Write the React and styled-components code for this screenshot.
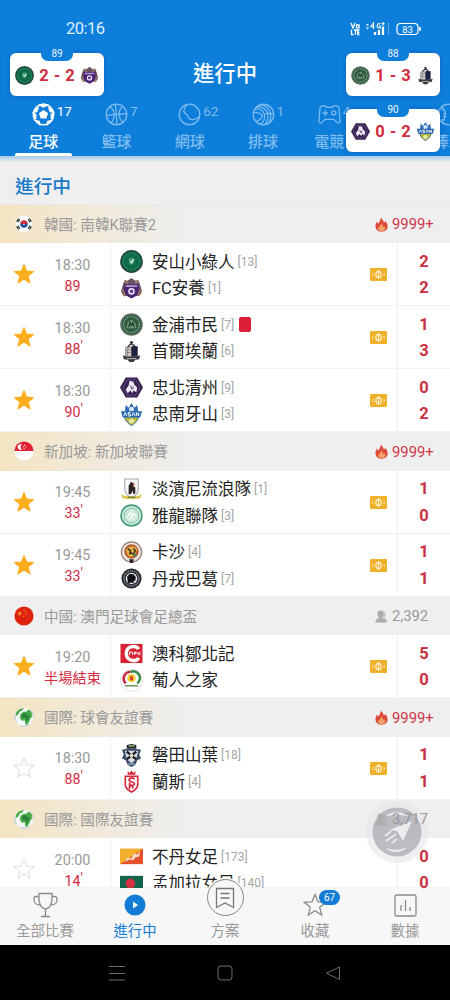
import React from "react"
import styled, { createGlobalStyle } from "styled-components"

const sports = [
    { name: "足球", count: "17", icon: "soccer", active: true },
    { name: "籃球", count: "7", icon: "basketball" },
    { name: "網球", count: "62", icon: "tennis" },
    { name: "排球", count: "1", icon: "volleyball" },
    { name: "電競", count: "4", icon: "esports", width: 59 },
    { name: "棒球", count: "", icon: "baseball", width: 180 }
]

const leagues = [
    {
        name: "韓國: 南韓K聯賽2", flag: "korea", hot: true, warm: true, viewers: "9999+",
        matches: [
            { starred: true, time: "18:30", minute: "89", tips: true, teams: [
                { crest: "ansan", name: "安山小綠人", rank: 13, score: 2 },
                { crest: "anyang", name: "FC安養", rank: 1, score: 2 }
            ] },
            { starred: true, time: "18:30", minute: "88", tick: true, tips: true, teams: [
                { crest: "gimpo", name: "金浦市民", rank: 7, score: 1, redCard: true },
                { crest: "seoul", name: "首爾埃蘭", rank: 6, score: 3 }
            ] },
            { starred: true, time: "18:30", minute: "90", tick: true, tips: true, teams: [
                { crest: "cheongju", name: "忠北清州", rank: 9, score: 0 },
                { crest: "asan", name: "忠南牙山", rank: 3, score: 2 }
            ] }
        ]
    },
    {
        name: "新加坡: 新加坡聯賽", flag: "singapore", hot: true, warm: true, viewers: "9999+",
        matches: [
            { starred: true, time: "19:45", minute: "33", tick: true, tips: true, teams: [
                { crest: "tampines", name: "淡濱尼流浪隊", rank: 1, score: 1 },
                { crest: "geylang", name: "雅龍聯隊", rank: 3, score: 0 }
            ] },
            { starred: true, time: "19:45", minute: "33", tick: true, tips: true, teams: [
                { crest: "khalsa", name: "卡沙", rank: 4, score: 1 },
                { crest: "tanjong", name: "丹戎巴葛", rank: 7, score: 1 }
            ] }
        ]
    },
    {
        name: "中國: 澳門足球會足總盃", flag: "china", viewers: "2,392",
        matches: [
            { starred: true, time: "19:20", minute: "半場結束", tips: true, teams: [
                { crest: "cpk", name: "澳科鄒北記", score: 5 },
                { crest: "portugal", name: "葡人之家", score: 0 }
            ] }
        ]
    },
    {
        name: "國際: 球會友誼賽", flag: "globe", hot: true, warm: true, viewers: "9999+",
        matches: [
            { time: "18:30", minute: "88", tick: true, tips: true, teams: [
                { crest: "jubilo", name: "磐田山葉", rank: 18, score: 1 },
                { crest: "reims", name: "蘭斯", rank: 4, score: 1 }
            ] }
        ]
    },
    {
        name: "國際: 國際友誼賽", flag: "globe", warm: true, viewers: "3,717",
        matches: [
            { time: "20:00", minute: "14", tick: true, teams: [
                { crest: "bhutan", name: "不丹女足", rank: 173, score: 0 },
                { crest: "bangladesh", name: "孟加拉女足", rank: 140, score: 0 }
            ] }
        ]
    }
]

const crests = {
    ansan: (
        <>
            <circle cx="12" cy="12" r="11" fill="#0d6b47" stroke="#26483d" strokeWidth="1.8" />
            <circle cx="12" cy="12" r="8.6" fill="none" stroke="#2f8a66" strokeWidth="1.4" strokeDasharray="1.2 .9" />
            <path d="M8.5 10c1-3 6-3.500 7 0l-1 4-3 2.500-2-2z" fill="#2f8a66" />
            <path d="M10 9l2 3 1-3 2 1-2 4h-2z" fill="#bfe3d0" />
        </>
    ),
    anyang: (
        <>
            <path d="M3 8l2-5 3 1 4-3 4 3 3-1 2 5 2 7-3 5-3-.5-5 3-5-3-3 .5-3-5z" fill="#6b5363" />
            <path d="M2 14l3 2-1 4M22 14l-3 2 1 4M6 4l2 3M18 4l-2 3" stroke="#b08b5a" strokeWidth="1.500" fill="none" />
            <path d="M4.500 7.500h15v7c0 4-4 6-7.500 7.500C8.500 20.500 4.500 18.500 4.500 14.500z" fill="#4a2374" />
            <path d="M6 9.500h12" stroke="#a995c9" strokeWidth="2" />
            <circle cx="12" cy="15" r="3.400" fill="#efe9f7" />
            <path d="M12 12.800l2 1.500-.8 2.300h-2.400L10 14.300z" fill="#5d3b91" />
        </>
    ),
    gimpo: (
        <>
            <circle cx="12" cy="12" r="11" fill="#2f5a3f" stroke="#5f7267" strokeWidth="1.600" />
            <circle cx="12" cy="12" r="8.300" fill="none" stroke="#8fae96" strokeWidth="1.300" strokeDasharray="1.400 1" />
            <path d="M7 16c0-5 2-8 5-9 3 1 5 4 5 9z" fill="#6f9678" />
            <path d="M9 15l1.500-5L12 13l1.500-3 1.500 5" stroke="#21452e" strokeWidth="1.400" fill="none" />
        </>
    ),
    seoul: (
        <>
            <path d="M12 1v4M10.300 2.500h3.400M8 7l4-3.500L16 7" stroke="#303038" strokeWidth="1.500" fill="none" />
            <path d="M6 7.500h6v10H6z" fill="#d9cfca" stroke="#55555c" strokeWidth=".8" />
            <path d="M12 6.500h6.500v11H12z" fill="#1c2340" />
            <path d="M7 10h4M7 13h4M8 9v8" stroke="#77706c" strokeWidth=".8" />
            <path d="M3 16l4 1.500h10l4-1.500-1 4-4 .5-2 2.500h-4l-2-2.500-4-.5z" fill="#34343c" />
            <path d="M7 19.500h10" stroke="#c9c9cf" strokeWidth="1" />
        </>
    ),
    cheongju: (
        <>
            <path d="M6 1.500h12L24 12l-6 10.500H6L0 12z" fill="#35204f" />
            <path d="M7.500 4h9l4.500 8-4.500 8h-9L3 12z" fill="none" stroke="#6d5a8c" strokeWidth=".8" />
            <path d="M10 5l4 1 1 3 3 3-1 5-3-2-1 3-2-3-3 3-2-4 3-4z" fill="#eeeaf5" />
            <path d="M11 10l1.500 4M14 11l-1 3" stroke="#4a3468" strokeWidth="1" />
        </>
    ),
    asan: (
        <>
            <path d="M6 2l3 3 3-5 3 5 3-3 1 7H5z" fill="#2f6cb5" />
            <circle cx="12" cy="6.500" r="2.600" fill="#d6e8f6" />
            <path d="M4.500 12h15c0 6-3.500 9-7.500 11.500C8 21 4.500 18 4.500 12z" fill="#b9b63c" stroke="#33659e" strokeWidth="1" />
            <path d="M1 8.500h22l-2 6.500H3z" fill="#2664ae" />
            <path d="M4 13.500l1.500-3.500L7 13.500M11 10H8.500v1.700H11v1.800H8.500M12.500 13.500L14 10l1.500 3.500M17 13.500V10l2.500 3.500V10" stroke="#fff" strokeWidth="1" fill="none" />
            <path d="M12 16l3 2-1 3h-4l-1-3z" fill="#e4e7a4" />
        </>
    ),
    tampines: (
        <>
            <path d="M5 1h14v10c0 5-3 8-7 10-4-2-7-5-7-10z" fill="#fbfbfb" stroke="#a8a8a8" strokeWidth="1.200" />
            <path d="M9 17V8l2.500-4L15 6l-1 2.500L16 10v6l-2 1-1-4-1.500 4z" fill="#2b2525" />
            <path d="M13 6l3 1-2 2z" fill="#df6541" />
            <path d="M1 17l5 2h12l5-2-2 4-5 1H8l-5-1z" fill="#d8c547" />
            <path d="M8 20h8" stroke="#517e38" strokeWidth="1.200" />
        </>
    ),
    geylang: (
        <>
            <circle cx="12" cy="12" r="10.900" fill="#d9efe4" stroke="#4b9d7c" strokeWidth="1.800" />
            <circle cx="12" cy="12" r="7.800" fill="#c6e6d7" stroke="#7bbfa0" strokeWidth="1" />
            <path d="M7 15l3-5 2-3v6l3-3 2 5M9 17l3-3 3 3" stroke="#f8fffb" strokeWidth="1.300" fill="none" />
        </>
    ),
    khalsa: (
        <>
            <circle cx="12" cy="11.500" r="10.600" fill="#e9e4dc" stroke="#9b7873" strokeWidth="1.200" />
            <circle cx="12" cy="11" r="7.500" fill="#b8572e" />
            <path d="M6 9c2-4 10-5 12 0l-2 5-4 3-4-2z" fill="#e2b441" />
            <path d="M8 8l3 2-1 4M14 8l2 2-2 4-3-2" stroke="#45301f" strokeWidth="1.600" fill="none" />
            <path d="M9.500 19h5l-1 4h-3z" fill="#26272d" />
            <path d="M14 13l3 3" stroke="#47845b" strokeWidth="2" />
        </>
    ),
    tanjong: (
        <>
            <circle cx="12" cy="12" r="10.500" fill="#24282c" />
            <circle cx="12" cy="12" r="7.900" fill="none" stroke="#7f868b" strokeWidth="1.600" strokeDasharray="1.400 .8" />
            <circle cx="12" cy="12" r="6" fill="#e7e9ea" />
            <path d="M8 16l-.5-6L10 7.200l4 .3 2.500 3L16 14l-2 1 .5 2.500-3-1.500-2 1.500z" fill="#101215" />
        </>
    ),
    cpk: (
        <>
            <path d="M.5 2h23v20H.5z" fill="#d72332" />
            <path d="M19.500 7.500C17 3 7 3.500 6.500 12c.5 8.500 10.500 9 13 4.500" fill="none" stroke="#fff" strokeWidth="3.600" />
            <path d="M10 10.500v3M10 10.500h3v3M15 13.500v-3h2v1.500h-2M19 10.500v3M21.500 10.500L19 12l2.500 1.500" stroke="#fff" strokeWidth="1" fill="none" />
        </>
    ),
    portugal: (
        <>
            <circle cx="12" cy="12" r="11.400" fill="#fff" stroke="#d8d8d8" strokeWidth=".8" />
            <path d="M6 15a7 7 0 0 1 5-12" fill="none" stroke="#c3283d" strokeWidth="2.600" />
            <path d="M11 3a7 7 0 0 1 7 12" fill="none" stroke="#338b47" strokeWidth="2.600" />
            <circle cx="12" cy="9.500" r="4.400" fill="#f0d335" />
            <path d="M10.500 7.500h3V11L12 12.500 10.500 11z" fill="#d93b33" />
            <path d="M5 17.500h14" stroke="#6b8d58" strokeWidth="1.500" />
        </>
    ),
    jubilo: (
        <>
            <path d="M7 1l5-1 5 1v4H7z" fill="#222c3b" />
            <path d="M9 2h6" stroke="#a3b94a" strokeWidth="1.500" />
            <path d="M2 6l6-1h8l6 1-2 5 2 4-4 2-2 5-4 2-4-2-2-5-4-2 2-4z" fill="#3b4b66" />
            <path d="M5 7h14l-2 9-5 4-5-4z" fill="#d5dce4" />
            <path d="M7 8l10 8M17 8L7 16" stroke="#16191f" strokeWidth="2.400" />
            <circle cx="12" cy="12" r="2" fill="#e6dcb8" />
            <path d="M8 21h8" stroke="#90a4bd" strokeWidth="1.500" />
        </>
    ),
    reims: (
        <>
            <path d="M8 1l2 2 2-2.500L14 3l2-2v4H8z" fill="#d5263a" />
            <path d="M5.500 6.500h13V15c0 4-3 6-6.500 8-3.500-2-6.500-4-6.500-8z" fill="#fff" stroke="#d5263a" strokeWidth="1.700" />
            <path d="M15 9.500c-1-1.500-5.500-1.300-5.500 1 0 2.500 5.500 1.500 5.500 4 0 1.500-4 2.500-5.500.5M10 20v-7M14 19l-2-3" fill="none" stroke="#d5263a" strokeWidth="1.800" />
        </>
    ),
    bhutan: (
        <>
            <path d="M0 4h24v16H0z" fill="#e5502a" />
            <path d="M0 4h24L0 20z" fill="#f3b02d" />
            <path d="M5 18l3-5 4 1 2-5 4 1 3-4-1 6-4 1-2 3-4-1z" fill="#f6dcc7" />
        </>
    ),
    bangladesh: (
        <>
            <path d="M0 4h24v16H0z" fill="#13664e" />
            <circle cx="10.800" cy="12" r="5" fill="#d63140" />
        </>
    )
}

const flags = {
    korea: (
        <>
            <circle cx="12" cy="12" r="10.500" fill="#fff" />
            <path d="M7.500 12a4.500 4.500 0 0 1 9 0z" fill="#cf3045" />
            <path d="M7.500 12a4.500 4.500 0 0 0 9 0c-2-2-3.500 1.500-5 .8C9.500 11.500 8.500 11 7.500 12z" fill="#1e4f9c" />
            <path d="M3 9l2.500-3.500M4.500 10L7 6.500M21 9l-2.500-3.500M19.500 10L17 6.500M3 15l2.500 3.500M4.500 14L7 17.500M21 15l-2.500 3.500M19.500 14L17 17.500" stroke="#292929" strokeWidth="1.300" />
        </>
    ),
    singapore: (
        <>
            <circle cx="12" cy="12" r="11.500" fill="#fff" />
            <path d="M.5 12a11.500 11.500 0 0 1 23 0z" fill="#e02033" />
            <path d="M9.500 4a3.600 3.600 0 1 0 0 6.500 4 4 0 0 1 0-6.500z" fill="#fff" />
            <path d="M12 5h1.300M10.500 7h1.300M13.500 7h1.300M11.500 9.200h1.300" stroke="#fff" strokeWidth="1.200" />
        </>
    ),
    china: (
        <>
            <circle cx="12" cy="12" r="11.500" fill="#de2410" />
            <path d="M7 6l.9 2h2.100l-1.700 1.400.6 2.200L7 10.300l-1.900 1.300.6-2.200L4 8h2.100z" fill="#f5a12b" />
            <path d="M11.500 4.500h1.200M13.500 7h1.200M13.300 10h1.200M11 12.500h1.200" stroke="#f5a12b" strokeWidth="1.200" />
        </>
    ),
    globe: (
        <>
            <circle cx="12" cy="12" r="11" fill="#f5f8f8" />
            <path d="M1.500 9A11 11 0 0 0 3 18M19 3.500A11 11 0 0 1 23 12M8 22.300A11 11 0 0 0 18 21" fill="none" stroke="#b9cdd8" strokeWidth="1.400" />
            <path d="M2.500 7C4.500 3.500 8 1.500 12 1.300L10 4 7 5.500 5 9l-3 2zM8 8l4-2.500 3 .5 1-2.500 3 .5 3 4-1 1.500 1 2.500-2 1-2 5-2.500 3.500-2-1-.5-4.500-3.500.5L7 13z" fill="#46a844" />
            <path d="M10 8.500l4-1 2 3 3-1-2 5-2 3-1-4.500-4-.5z" fill="#267d37" />
        </>
    )
}

const sportIcons = {
    soccer: (
        <>
            <circle cx="12" cy="12" r="10.700" />
            <path d="M12 8l4 3-1.500 4.500h-5L8 11zM8 2.200l4 2 4-2-4-1zM1.500 9.500L5 9l1.500-4-3 2zM22.500 9.500L19 9l-1.500-4 3 2zM4 18.500l3.500.5.500 3.500zM20 18.500l-3.500.5-.5 3.500zM1.500 10.500L4 12v4l-1.500.5zM22.500 10.500L20 12v4l1.500.5z" fill="currentColor" />
        </>
    ),
    basketball: (
        <>
            <circle cx="12" cy="12" r="10.700" />
            <path d="M11 1.500l1.500 21M1.500 13L22.500 11M5 4c6 4 6 12 1 17M18.500 3.500c-5 4-5 12 .5 17" />
        </>
    ),
    tennis: (
        <>
            <circle cx="12" cy="12" r="10.700" />
            <path d="M9.500 1.700C5.500 6 5 10.500 8.500 11.500c2 .5 1.500 2.500 2.500 4 2 3 7 2 11-1" />
        </>
    ),
    volleyball: (
        <>
            <circle cx="12" cy="12" r="10.700" />
            <path d="M3 6.500c4-1 8 1 10 5.500M4.500 4.500C9 3 14 5.500 16.500 11M8 2c6 0 10 4 11.500 9M1.500 10c4-.5 7 .5 9.500 3.500M13 12c3-1.500 6.500-1.500 9.700 0M13 12c.5 4-1 8-4 10.300M16.500 11.200c.8 4-.5 8-3 11.300M19.500 11c.5 3-.2 6-1.500 9M11 13.500c-1.500 3-4 5-6.500 6" />
        </>
    ),
    esports: (
        <>
            <path d="M5 3h3l1 1.500h6L16 3h3c2 0 3 1 3 3l1 13c0 2-2 2.500-3.500 1l-3-3h-9l-3 3C3 21.500 1 21 1 19L2 6c0-2 1-3 3-3z" />
            <path d="M7.500 7.500v6M4.500 10.500h6" />
            <circle cx="16.500" cy="10.500" r="2.200" />
        </>
    ),
    baseball: (
        <>
            <circle cx="12" cy="12" r="10.700" />
            <path d="M5 4c5 5 5 11 0 16M19 4c-5 5-5 11 0 16M5 7.500l3-1M6.500 11h3M6.500 14h3M5 17l3 1" />
        </>
    )
}

const Crest = ({ name, size = 23 }) => (
    <CrestSvg viewBox="0 0 24 24" $size={ size }>{ crests[name] }</CrestSvg>
)

const FloatingScore = ({ minute, home, away, score }) => (
    <ScoreCard>
        <ScoreMinute>{ minute }</ScoreMinute>
        <Crest name={ home } size={ 19 } />
        <ScoreText>{ score }</ScoreText>
        <Crest name={ away } size={ 19 } />
    </ScoreCard>
)

const Match = ({ match }) => (
    <MatchRow>
        <Star viewBox="0 0 24 24" $on={ match.starred }>
            <path d="M12 1.500l2.900 7.300 7.900.5-6.100 5 2 7.700L12 17.700l-6.700 4.300 2-7.700-6.100-5 7.900-.5z" />
        </Star>
        <Kickoff>
            <Time>{ match.time }</Time>
            <Minute>
                { match.minute }
                { match.tick && <Tick>'</Tick> }
            </Minute>
        </Kickoff>
        <Teams>
            { match.teams.map(team => (
                <Team key={ team.name }>
                    <Crest name={ team.crest } />
                    <TeamName>{ team.name }</TeamName>
                    { team.rank && <Rank>[{ team.rank }]</Rank> }
                    { team.redCard && <RedCard /> }
                </Team>
            )) }
        </Teams>
        <Tips>
            { match.tips && (
                <svg width="17" height="13" viewBox="0 0 17 13">
                    <rect width="17" height="13" rx="1" fill="#efb02b" />
                    <ellipse cx="8.500" cy="6.500" rx="2.600" ry="3.200" fill="none" stroke="#fff4d3" strokeWidth="1.200" />
                    <path d="M8.500 2v9M2 6.500l1.500-1M2 6.500l1.500 1M15 6.500l-1.500-1M15 6.500l-1.500 1" stroke="#fff4d3" strokeWidth="1" />
                </svg>
            ) }
        </Tips>
        <Scores>
            { match.teams.map(team => <Score key={ team.name }>{ team.score }</Score>) }
        </Scores>
    </MatchRow>
)

const League = ({ league }) => (
    <section>
        <LeagueBar $warm={ league.warm }>
            <Flag viewBox="0 0 24 24">{ flags[league.flag] }</Flag>
            <LeagueName>{ league.name }</LeagueName>
            <Viewers $hot={ league.hot }>
                { league.hot ? (
                    <svg width="13" height="15" viewBox="0 0 13 15">
                        <path d="M6 .5c1 2 3 3 2.800 5.500L10.500 4c2 3 3 6 1.200 8.500C9 15.500 4 15.500 1.500 12.500-.5 9.500.8 6.500 2 4.500l1 2.300C4.500 5 5.500 3 6 .5z" fill="#dc4936" />
                        <path d="M6.500 6c0 2 2 2.500 2.500 4.500l1-1.500c1 2 .5 4.500-2.500 5-3 .5-5-1-4.500-4l1 1C4.500 9 6 8 6.500 6z" fill="#f3a06b" />
                    </svg>
                ) : (
                    <svg width="13" height="13" viewBox="0 0 13 13" fill="#adadad">
                        <path d="M7.500 1c4 0 4 5 2 6.500L12.500 10v2.500H8z" opacity=".6" />
                        <path d="M5.500.5c4 0 3.500 5 1.700 6.800.5 1.700 3.800 1.700 4 5.200H.3c0-3.500 3-3.500 3.500-5.200C2 5.500 1.500.5 5.500.5z" />
                    </svg>
                ) }
                { league.viewers }
            </Viewers>
        </LeagueBar>
        { league.matches.map(match => <Match key={ match.teams[0].name } match={ match } />) }
    </section>
)

const App = () => (
    <Screen>
        <GlobalStyle />
        <Header>
            <StatusBar>
                <Clock>20:16</Clock>
                <svg width="74" height="16" viewBox="0 0 74 16" fill="none" stroke="#fff">
                    <path d="M1 2l2 5 2-5M6.500 4h2.500v2.800H6.500zM1.500 8.500v5h2M4 9h3M5.500 9v4.500M9.500 9H7.700v4.500h1.800M7.700 11.300h1.800" strokeWidth="1.300" />
                    <path d="M16 4.500l1.500-2 1.500 2zM16 6.500l1.500 2 1.500-2z" fill="#fff" stroke="none" />
                    <path d="M23.500 8V2L20.800 5.800h3.800M30.300 3c-3.300-2-4.300 4-1.300 4h1.300V5h-1.300M33 1v3.500M31.300 2.800h3.500" strokeWidth="1.100" />
                    <path d="M25 11v3M29 9v5M33 5.500V14" strokeWidth="2.300" />
                    <path d="M38.500 2v12" strokeWidth=".6" opacity=".6" />
                    <rect x="47" y="2.500" width="21" height="11" rx="3.500" strokeWidth="1.200" />
                    <path d="M70 6v4" strokeWidth="1.600" />
                    <BatteryText x="57.500" y="11.500">83</BatteryText>
                </svg>
            </StatusBar>
            <PageTitle>進行中</PageTitle>
            <SportTabs>
                { sports.map(sport => (
                    <SportTab key={ sport.name } $active={ sport.active } $width={ sport.width }>
                        <SportIcon>
                            <svg width="23" height="23" viewBox="0 0 24 24" fill="none" stroke="currentColor" strokeWidth="1.300">
                                { sportIcons[sport.icon] }
                            </svg>
                            <SportCount>{ sport.count }</SportCount>
                        </SportIcon>
                        <SportName>{ sport.name }</SportName>
                    </SportTab>
                )) }
            </SportTabs>
        </Header>
        <FloatingLeft>
            <FloatingScore minute="89" home="ansan" away="anyang" score="2 - 2" />
        </FloatingLeft>
        <FloatingRight>
            <FloatingScore minute="88" home="gimpo" away="seoul" score="1 - 3" />
            <FloatingScore minute="90" home="cheongju" away="asan" score="0 - 2" />
        </FloatingRight>
        <Feed>
            <SectionTitle>進行中</SectionTitle>
            { leagues.map(league => <League key={ league.name } league={ league } />) }
        </Feed>
        <SwitchButton>
            <svg width="62" height="62" viewBox="0 0 62 62">
                <circle cx="31" cy="31" r="31" fill="#e3e4ea" opacity=".55" />
                <circle cx="31" cy="31" r="24.500" fill="#8f949b" opacity=".55" />
                <path d="M20 15c5-5 17-5 22 0-7-1.500-15-1.500-22 0zM20 47c7 2.500 14 2.500 21-1-4 6-16 7-21 1z" fill="#f4f4f6" opacity=".85" />
                <path d="M46 20L23 29l8 1 6 10z" fill="#f4f4f6" opacity=".85" />
                <path d="M19 35l6-5M20 40l10-7M26 42l5-4" stroke="#f4f4f6" strokeWidth="2" opacity=".85" />
            </svg>
        </SwitchButton>
        <TabBar>
            <Tab>
                <TabIcon>
                    <svg width="25" height="26" viewBox="0 0 25 26" fill="none" stroke="#8b8b8b" strokeWidth="1.300">
                        <path d="M6 1.500h13c.5 8-1 14.500-6.500 15.500C7 16 5.500 9.500 6 1.500zM12.500 17v7M8 24.500h9M6 4.500H3c-2 0-2 1-2 3 0 3 2 5.500 5.500 5.500M19 4.500h3c2 0 2 1 2 3 0 3-2 5.500-5.500 5.500" />
                    </svg>
                </TabIcon>
                全部比賽
            </Tab>
            <Tab $active>
                <TabIcon>
                    <svg width="22" height="22" viewBox="0 0 22 22">
                        <circle cx="11" cy="11" r="10.500" fill="#147cd5" />
                        <path d="M9 7.500v7l5-3.500z" fill="#fff" />
                    </svg>
                </TabIcon>
                進行中
            </Tab>
            <Tab>
                <TabIcon />
                <PlanButton>
                    <svg width="20" height="22" viewBox="0 0 20 22" fill="none" stroke="#777" strokeWidth="1.300">
                        <path d="M1.500 1.500h17v19L10 16l-8.500 4.500zM5.500 6.500h9M5.500 11h9" />
                    </svg>
                </PlanButton>
                方案
            </Tab>
            <Tab>
                <TabIcon>
                    <svg width="24" height="24" viewBox="0 0 24 24" fill="none" stroke="#8b8b8b" strokeWidth="1.300">
                        <path d="M12 1.500l2.900 7.300 7.900.5-6.100 5 2 7.700L12 17.700l-6.700 4.300 2-7.700-6.100-5 7.900-.5z" />
                    </svg>
                    <Badge>67</Badge>
                </TabIcon>
                收藏
            </Tab>
            <Tab>
                <TabIcon>
                    <svg width="23" height="23" viewBox="0 0 23 23" fill="none" stroke="#8b8b8b" strokeWidth="1.300">
                        <rect x="1" y="1" width="21" height="21" rx="1.500" />
                        <path d="M7 11v6M11.500 6v11M16 13v4" />
                    </svg>
                </TabIcon>
                數據
            </Tab>
        </TabBar>
        <SystemNav>
            <svg width="16" height="16" viewBox="0 0 16 16" fill="none" stroke="#6c6c6c"><path d="M0 1.500h16M0 8.500h16M0 15h16" /></svg>
            <svg width="16" height="16" viewBox="0 0 16 16" fill="none" stroke="#6c6c6c"><rect x="1" y="1" width="14" height="14" rx="3" /></svg>
            <svg width="16" height="16" viewBox="0 0 16 16" fill="none" stroke="#6c6c6c"><path d="M14.500 2v12.500L1.500 8.200z" strokeLinejoin="round" /></svg>
        </SystemNav>
    </Screen>
)

const GlobalStyle = createGlobalStyle`
    body {
        margin: 0;
        background: #000;
        font-family: Roboto, "Noto Sans CJK TC", sans-serif;
    }
    * {
        box-sizing: border-box;
    }
    svg {
        display: block;
        flex-shrink: 0;
    }
`
const Screen = styled.div`
    position: relative;
    display: flex;
    flex-direction: column;
    width: 450px;
    height: 1000px;
    overflow: hidden;
`
const Header = styled.header`
    display: flex;
    flex-direction: column;
    flex-shrink: 0;
    height: 156px;
    background: #0e7edb;
    color: white;
`
const StatusBar = styled.div`
    display: flex;
    align-items: center;
    justify-content: space-between;
    height: 58px;
    padding: 0 26px 0 66px;
`
const Clock = styled.span`
    font-size: 16.5px;
    line-height: 20px;
    letter-spacing: -.5px;
    color: #dcf0ff;
`
const BatteryText = styled.text`
    font-size: 9.5px;
    fill: #fff;
    stroke: none;
    text-anchor: middle;
`
const PageTitle = styled.h1`
    margin: 0;
    height: 42px;
    padding-top: 1px;
    font-size: 21.3px;
    font-weight: 500;
    line-height: 30px;
    text-align: center;
`
const SportTabs = styled.nav`
    display: flex;
    flex: 1;
    padding-left: 6.5px;
    overflow: hidden;
`
const SportTab = styled.div`
    display: flex;
    flex-direction: column;
    align-items: center;
    flex: 0 0 ${({ $width }) => $width || 73.3}px;
    padding-top: 3px;
    color: ${({ $active }) => $active ? "#fff" : "#7fbdf0"};

    &::after {
        content: "";
        width: 57px;
        height: 3px;
        margin-top: auto;
        border-radius: 2px 2px 0 0;
        background: ${({ $active }) => $active ? "#fff" : "transparent"};
    }
`
const SportIcon = styled.div`
    position: relative;
    height: 24px;
`
const SportCount = styled.span`
    position: absolute;
    left: 25px;
    top: -1px;
    font-size: 13.5px;
    line-height: 18px;
`
const SportName = styled.span`
    font-size: 15px;
    font-weight: 500;
    line-height: 22px;
    margin-top: 4px;
`
const FloatingLeft = styled.div`
    position: absolute;
    left: 10px;
    top: 53px;
`
const FloatingRight = styled.div`
    position: absolute;
    left: 346px;
    top: 53px;
    display: flex;
    flex-direction: column;
    gap: 13px;
`
const ScoreCard = styled.div`
    position: relative;
    display: flex;
    align-items: center;
    justify-content: space-between;
    width: 94px;
    height: 43px;
    padding: 1px 5px 0;
    border-radius: 6px;
    background: white;
    box-shadow: 0 0 4px rgba(0, 40, 90, .3);
`
const ScoreMinute = styled.span`
    position: absolute;
    left: 31px;
    top: -7px;
    width: 32px;
    height: 15px;
    border-radius: 0 0 7px 7px;
    background: #0e7edb;
    color: #e6f4ff;
    font-size: 10px;
    line-height: 15px;
    text-align: center;
`
const ScoreText = styled.span`
    color: #d12a3a;
    font-size: 16.5px;
    font-weight: 700;
    word-spacing: 1px;
`
const CrestSvg = styled.svg`
    width: ${({ $size }) => $size}px;
    height: ${({ $size }) => $size}px;
`
const Feed = styled.main`
    flex: 1;
    min-height: 0;
    overflow: hidden;
    background: linear-gradient(#a9cbea 0, #c5daec 3px, #efefef 6px);
`
const SectionTitle = styled.h2`
    margin: 0;
    height: 48.7px;
    padding: 16px 0 0 15px;
    border-bottom: 1px solid #e9e9e9;
    color: #1779c9;
    font-size: 18.7px;
    font-weight: 500;
    line-height: 30px;
`
const LeagueBar = styled.div`
    display: flex;
    align-items: center;
    height: 38.5px;
    padding-left: 14px;
    background: ${({ $warm }) => $warm ? "linear-gradient(90deg, #f4e4c2 0, #f1e8d6 80px, #efefef 190px)" : "#efefef"};
`
const Flag = styled.svg`
    width: 20px;
    height: 20px;
`
const LeagueName = styled.span`
    flex: 1;
    margin-left: 10px;
    padding-top: 2px;
    color: #999;
    font-size: 14.6px;
    line-height: 22px;
`
const Viewers = styled.span`
    position: relative;
    z-index: 1;
    display: flex;
    align-items: center;
    gap: 4px;
    width: 75px;
    padding-top: 1px;
    color: ${({ $hot }) => $hot ? "#cf3647" : "#999"};
    font-size: 14.8px;
`
const MatchRow = styled.div`
    display: flex;
    align-items: center;
    height: 63px;
    padding-left: 13px;
    border-bottom: 1px solid #f1f1f1;
    background: white;
`
const Star = styled.svg`
    width: 22px;
    height: 22px;
    fill: ${({ $on }) => $on ? "#fbad1d" : "none"};
    stroke: ${({ $on }) => $on ? "#fbad1d" : "#d9d9d9"};
    stroke-width: 1;
`
const Kickoff = styled.div`
    display: flex;
    flex-direction: column;
    align-items: center;
    width: 76px;
    height: 100%;
    padding-top: 12.5px;
    border-right: 1px solid #f1f1f1;
`
const Time = styled.span`
    color: #999;
    font-size: 14.4px;
    line-height: 20px;
`
const Minute = styled.span`
    position: relative;
    color: #d22b40;
    font-size: 14.2px;
    line-height: 20px;
    white-space: nowrap;
`
const Tick = styled.span`
    position: absolute;
    left: 100%;
    top: -3px;
`
const Teams = styled.div`
    flex: 1;
    padding: 2px 0 0 9px;
`
const Team = styled.div`
    display: flex;
    align-items: center;
    height: 26.6px;
`
const TeamName = styled.span`
    margin-left: 9px;
    padding-top: 2px;
    color: #222;
    font-size: 16.5px;
    line-height: 24px;
`
const Rank = styled.span`
    margin-left: 3px;
    color: #a5a5a5;
    font-size: 12px;
`
const RedCard = styled.span`
    width: 12px;
    height: 15px;
    margin-left: 5px;
    border-radius: 2px;
    background: #dc1f37;
`
const Tips = styled.div`
    width: 27px;
    padding-top: 1px;
`
const Scores = styled.div`
    display: flex;
    flex-direction: column;
    justify-content: center;
    width: 53px;
    height: 100%;
    padding-top: 2px;
    border-left: 1px solid #f1f1f1;
`
const Score = styled.span`
    color: #c9303f;
    font-size: 16.5px;
    font-weight: 700;
    line-height: 26.6px;
    text-align: center;
`
const SwitchButton = styled.div`
    position: absolute;
    left: 366px;
    top: 801px;
`
const TabBar = styled.nav`
    position: relative;
    display: flex;
    flex-shrink: 0;
    height: 57px;
    background: #f7f7f7;
    box-shadow: 0 -1px 2px rgba(0, 0, 0, .06);
`
const Tab = styled.div`
    position: relative;
    display: flex;
    flex-direction: column;
    align-items: center;
    flex: 1;
    padding-top: 4px;
    color: ${({ $active }) => $active ? "#147cd5" : "#999"};
    font-size: 14.4px;
    line-height: 27px;
`
const TabIcon = styled.div`
    position: relative;
    display: flex;
    align-items: center;
    height: 27px;
`
const PlanButton = styled.div`
    position: absolute;
    top: -9px;
    display: flex;
    align-items: center;
    justify-content: center;
    width: 37px;
    height: 37px;
    border: 1.3px solid #888;
    border-radius: 50%;
    background: #f7f7f7;
    box-shadow: 0 0 0 1.5px #f7f7f7;
`
const Badge = styled.span`
    position: absolute;
    left: 16px;
    top: -2px;
    width: 21px;
    height: 15px;
    border-radius: 8px;
    background: #147cd5;
    color: white;
    font-size: 10px;
    line-height: 15px;
    text-align: center;
`
const SystemNav = styled.footer`
    display: flex;
    align-items: center;
    justify-content: center;
    gap: 92px;
    flex-shrink: 0;
    height: 55px;
    background: #000;
`

export default App
